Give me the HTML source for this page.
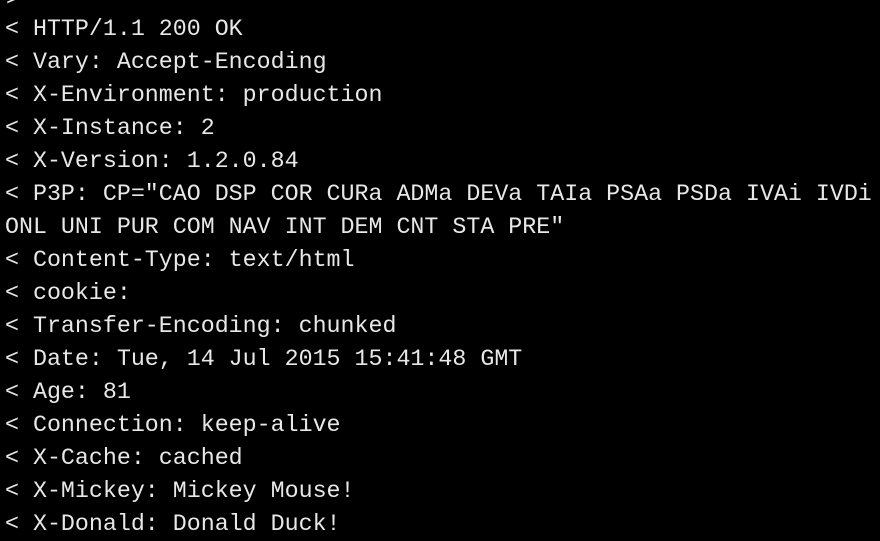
<!DOCTYPE html>
<html><head><meta charset="utf-8"><style>
html,body{margin:0;padding:0;background:#000;width:880px;height:539px;overflow:hidden}
pre{position:absolute;left:5px;top:13px;margin:0;font-family:"Liberation Mono",monospace;font-size:23.3px;line-height:33px;color:#e8e8e8;white-space:pre}
.t{position:absolute;left:6px;top:-12px;font-family:"Liberation Mono",monospace;font-size:23.3px;line-height:23px;color:#e8e8e8}
</style></head><body><div class="t">&gt;</div><pre>&lt; HTTP/1.1 200 OK
&lt; Vary: Accept-Encoding
&lt; X-Environment: production
&lt; X-Instance: 2
&lt; X-Version: 1.2.0.84
&lt; P3P: CP="CAO DSP COR CURa ADMa DEVa TAIa PSAa PSDa IVAi IVDi
ONL UNI PUR COM NAV INT DEM CNT STA PRE"
&lt; Content-Type: text/html
&lt; cookie:
&lt; Transfer-Encoding: chunked
&lt; Date: Tue, 14 Jul 2015 15:41:48 GMT
&lt; Age: 81
&lt; Connection: keep-alive
&lt; X-Cache: cached
&lt; X-Mickey: Mickey Mouse!
&lt; X-Donald: Donald Duck!</pre></body></html>
